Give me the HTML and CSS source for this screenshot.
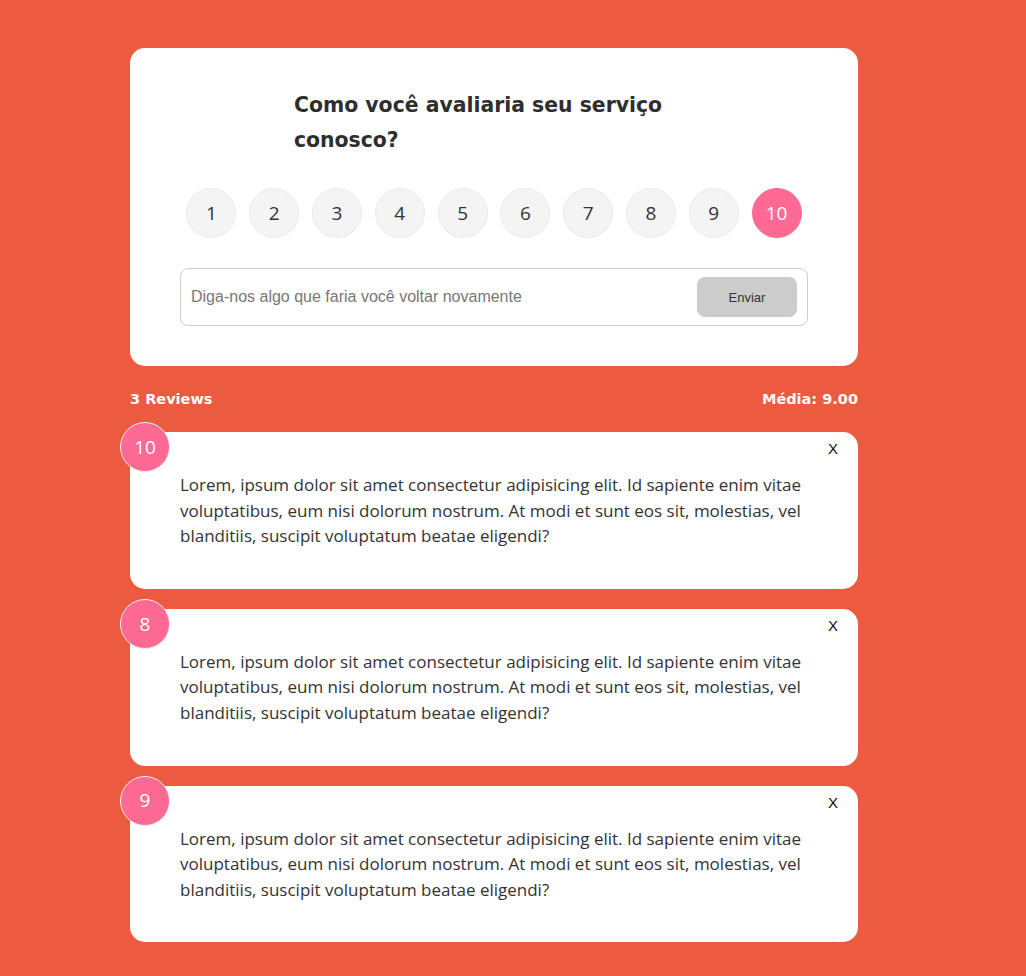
FILE: index.html
```html
<!DOCTYPE html>
<html lang="pt">
<head>
<meta charset="utf-8">
<title>Feedback</title>
<link rel="stylesheet" href="styles.css">
</head>
<body>
<div class="container">
  <div class="card">
    <header class="card-header">
      <h2>Como você avaliaria seu serviço conosco?</h2>
    </header>
    <ul class="rating">
      <li class="rate">1</li>
      <li class="rate">2</li>
      <li class="rate">3</li>
      <li class="rate">4</li>
      <li class="rate">5</li>
      <li class="rate">6</li>
      <li class="rate">7</li>
      <li class="rate">8</li>
      <li class="rate">9</li>
      <li class="rate selected">10</li>
    </ul>
    <div class="input-group">
      <input class="text-input" type="text" placeholder="Diga-nos algo que faria você voltar novamente">
      <button class="btn" type="button">Enviar</button>
    </div>
  </div>

  <div class="stats">
    <h4>3 Reviews</h4>
    <h4>Média: 9.00</h4>
  </div>

  <div class="feedback-list">
    <div class="card item">
      <div class="num-display">10</div>
      <button class="close" type="button">X</button>
      <p class="text-display">Lorem, ipsum dolor sit amet consectetur adipisicing elit. Id sapiente enim vitae voluptatibus, eum nisi dolorum nostrum. At modi et sunt eos sit, molestias, vel blanditiis, suscipit voluptatum beatae eligendi?</p>
    </div>
    <div class="card item">
      <div class="num-display">8</div>
      <button class="close" type="button">X</button>
      <p class="text-display">Lorem, ipsum dolor sit amet consectetur adipisicing elit. Id sapiente enim vitae voluptatibus, eum nisi dolorum nostrum. At modi et sunt eos sit, molestias, vel blanditiis, suscipit voluptatum beatae eligendi?</p>
    </div>
    <div class="card item">
      <div class="num-display">9</div>
      <button class="close" type="button">X</button>
      <p class="text-display">Lorem, ipsum dolor sit amet consectetur adipisicing elit. Id sapiente enim vitae voluptatibus, eum nisi dolorum nostrum. At modi et sunt eos sit, molestias, vel blanditiis, suscipit voluptatum beatae eligendi?</p>
    </div>
  </div>
</div>
</body>
</html>
```

FILE: styles.css
```css
* {
  box-sizing: border-box;
  margin: 0;
  padding: 0;
}

html, body {
  background: #ec5a40;
}

body {
  font-family: "Open Sans", "DejaVu Sans", sans-serif;
  color: #333;
  line-height: 1.6;
  padding-top: 48px;
}

.container {
  width: 728px;
  margin-left: 130px;
}

.card {
  background: #fff;
  color: #333;
  border-radius: 15px;
  padding: 40px 50px;
  position: relative;
}

.card-header {
  max-width: 400px;
  margin: 0 auto;
}

.card-header h2 {
  font-family: "DejaVu Sans", "Open Sans", sans-serif;
  font-size: 20.4px;
  font-weight: 700;
  line-height: 35px;
  color: #2e2e2e;
}

.rating {
  list-style: none;
  display: flex;
  justify-content: space-around;
  align-items: center;
  margin: 30px 0;
}

.rate {
  width: 50px;
  height: 50px;
  border-radius: 50%;
  background: #f4f4f4;
  border: 1px solid #eaeaea;
  display: flex;
  align-items: center;
  justify-content: center;
  font-size: 19px;
  font-weight: 400;
  color: #333;
}

.rate.selected {
  background: #ff6a95;
  border-color: #ff6a95;
  color: #fff;
}

.input-group {
  display: flex;
  align-items: center;
  border: 1px solid #ccc;
  border-radius: 8px;
  padding: 8px 10px;
  height: 58px;
}

.text-input {
  flex-grow: 1;
  border: none;
  outline: none;
  font-family: "Liberation Sans", Arial, sans-serif;
  font-size: 16px;
  color: #333;
  background: transparent;
}

.text-input::placeholder {
  color: #777;
}

.btn {
  width: 100px;
  height: 40px;
  border: none;
  border-radius: 8px;
  background: #ccc;
  color: #333;
  font-family: "Liberation Sans", Arial, sans-serif;
  font-size: 13px;
}

.stats {
  display: flex;
  justify-content: space-between;
  align-items: center;
  padding: 21px 0;
  color: #fff;
}

.stats h4 {
  font-family: "DejaVu Sans", "Open Sans", sans-serif;
  font-size: 14.5px;
  font-weight: 700;
  line-height: 24px;
}

.feedback-list {
  display: flex;
  flex-direction: column;
  gap: 20px;
}

.num-display {
  position: absolute;
  top: -10px;
  left: -10px;
  width: 50px;
  height: 50px;
  border-radius: 50%;
  background: #ff6a95;
  border: 1px solid #eee;
  color: #fff;
  font-size: 19px;
  font-weight: 400;
  display: flex;
  align-items: center;
  justify-content: center;
}

.close {
  position: absolute;
  top: 8px;
  right: 20px;
  background: none;
  border: none;
  font-family: "Liberation Sans", Arial, sans-serif;
  font-size: 15px;
  color: #111;
}

.text-display {
  font-size: 17px;
  line-height: 25.6px;
  color: #333;
}
```
